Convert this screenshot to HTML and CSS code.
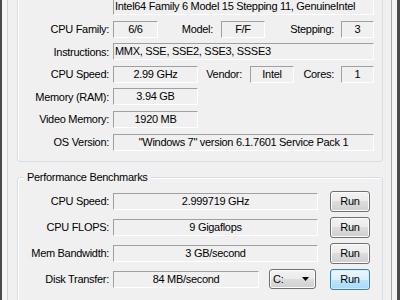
FILE: index.html
```html
<!DOCTYPE html>
<html lang="en">
<head>
  <meta charset="UTF-8" />
  <meta name="viewport" content="width=device-width, initial-scale=1.0" />
  <title>System Information</title>
  <link rel="stylesheet" href="styles.css">
</head>
<body>
  <div class="window">
    <div class="page">
      <!-- system info group (its caption is scrolled off the top) -->
      <div class="group info">
        <div class="row first">
          <span class="lbl"></span>
          <span class="field w261 left">Intel64 Family 6 Model 15 Stepping 11, GenuineIntel</span>
        </div>
        <div class="row">
          <span class="lbl">CPU Family:</span>
          <span class="field w45">6/6</span>
          <span class="lbl-s model">Model:</span>
          <span class="field w44">F/F</span>
          <span class="lbl-s stepping">Stepping:</span>
          <span class="field w33">3</span>
        </div>
        <div class="row">
          <span class="lbl">Instructions:</span>
          <span class="field w261 left">MMX, SSE, SSE2, SSE3, SSSE3</span>
        </div>
        <div class="row">
          <span class="lbl">CPU Speed:</span>
          <span class="field w85">2.99 GHz</span>
          <span class="lbl-s vendor">Vendor:</span>
          <span class="field w44">Intel</span>
          <span class="lbl-s cores">Cores:</span>
          <span class="field w33">1</span>
        </div>
        <div class="row">
          <span class="lbl">Memory (RAM):</span>
          <span class="field w85">3.94 GB</span>
        </div>
        <div class="row">
          <span class="lbl">Video Memory:</span>
          <span class="field w85">1920 MB</span>
        </div>
        <div class="row">
          <span class="lbl">OS Version:</span>
          <span class="field w261">"Windows 7" version 6.1.7601 Service Pack 1</span>
        </div>
      </div>

      <div class="group bench">
        <span class="legend">Performance Benchmarks</span>
        <div class="brow">
          <span class="lbl">CPU Speed:</span>
          <span class="field w205">2.999719 GHz</span>
          <button class="btn">Run</button>
        </div>
        <div class="brow">
          <span class="lbl">CPU FLOPS:</span>
          <span class="field w205">9 Gigaflops</span>
          <button class="btn">Run</button>
        </div>
        <div class="brow">
          <span class="lbl">Mem Bandwidth:</span>
          <span class="field w205">3 GB/second</span>
          <button class="btn">Run</button>
        </div>
        <div class="brow">
          <span class="lbl">Disk Transfer:</span>
          <span class="field w146">84 MB/second</span>
          <div class="combo">
            <span>C:</span>
            <svg width="7" height="4" viewBox="0 0 7 4"><path d="M0 0h7L3.5 4z" fill="#000"/></svg>
          </div>
          <button class="btn default">Run</button>
        </div>
      </div>
    </div>
  </div>
</body>
</html>
```

FILE: styles.css
```css
body {
  margin: 0;
  font-family: "Liberation Sans", Arial, sans-serif;
  font-size: 11px;
  letter-spacing: -0.3px;
  color: #000;
  background-color: #f0f0f0;
  overflow: hidden;
}
.window {
  display: flex;
  height: 300px;
  overflow: hidden;
  border-left: 2px solid #4a4a4a;
  border-right: 3px solid #4a4a4a;
  background-color: #f5f5f5;
  padding: 0 5px;
}
.page {
  flex: 1;
  border-left: 1px solid #d0d0d0;
  border-right: 1px solid #a9a9a9;
  background-color: #f0f0f0;
  padding: 0 8px 0 9px;
}
.group {
  position: relative;
  border: 1px solid #d5dfe5;
  border-radius: 3px;
  box-shadow: inset 1px 1px 0 #fff;
}
.info {
  margin-top: -20px;
  padding: 17px 0 10px;
}
.row {
  display: flex;
  align-items: center;
  height: 17px;
  margin-top: 5.6px;
}
.row.first {
  margin-top: 0;
  margin-bottom: 2.4px;
}
.lbl {
  width: 95px;
  padding-right: 4px;
  box-sizing: border-box;
  text-align: right;
  white-space: nowrap;
}
.lbl-s {
  box-sizing: border-box;
  text-align: right;
  white-space: nowrap;
}
.model { width: 63px; padding-right: 8px; }
.stepping { width: 76px; padding-right: 7px; }
.vendor { width: 52px; padding-right: 8px; }
.cores { width: 47px; padding-right: 7px; }
.field {
  box-sizing: border-box;
  height: 17px;
  line-height: 15px;
  border-top: 1px solid #a0a0a0;
  border-left: 1px solid #a0a0a0;
  border-right: 1px solid #fff;
  border-bottom: 1px solid #fff;
  text-align: center;
  white-space: nowrap;
  overflow: hidden;
}
.field.left {
  text-align: left;
  padding-left: 1px;
}
.w33 { width: 33px; }
.w44 { width: 44px; }
.w45 { width: 45px; }
.w85 { width: 85px; }
.w146 { width: 146px; }
.w205 { width: 205px; }
.w261 { width: 261px; }
.bench {
  margin-top: 15px;
  padding: 13px 0 12px;
  display: flex;
  flex-direction: column;
  gap: 5px;
}
.legend {
  position: absolute;
  top: -7px;
  left: 6px;
  padding: 0 3px;
  background-color: #f0f0f0;
  line-height: 13px;
}
.brow {
  display: flex;
  align-items: center;
  height: 21px;
}
.btn {
  box-sizing: border-box;
  width: 40px;
  height: 21px;
  margin-left: 12px;
  padding: 0;
  font: inherit;
  letter-spacing: inherit;
  color: #000;
  border: 1px solid #707070;
  border-radius: 3px;
  background: linear-gradient(#f2f2f2 0%, #ebebeb 50%, #dddddd 50%, #cfcfcf 100%);
  box-shadow: inset 0 0 0 1px #fcfcfc;
}
.btn.default {
  margin-left: 14px;
  border-color: #3c7fb1;
  background: linear-gradient(#eaf6fd 0%, #d9f0fc 50%, #bee6fd 50%, #a7d9f5 100%);
  box-shadow: inset 0 0 0 1px #d2ecfa;
}
.combo {
  box-sizing: border-box;
  display: flex;
  align-items: center;
  justify-content: space-between;
  width: 47px;
  height: 20px;
  margin-left: 10px;
  padding: 0 6px 0 3px;
  border: 1px solid #707070;
  border-radius: 3px;
  background: linear-gradient(#f2f2f2 0%, #ebebeb 50%, #dddddd 50%, #cfcfcf 100%);
  box-shadow: inset 0 0 0 1px #fcfcfc;
}
```
